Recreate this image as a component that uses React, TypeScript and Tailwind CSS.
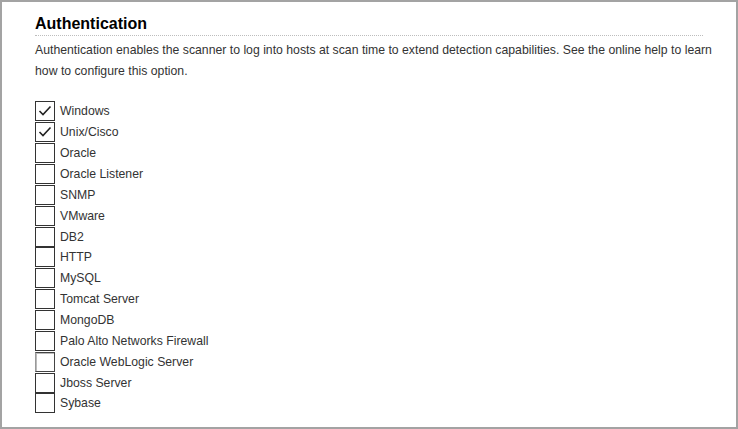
import React from "react";

const items = [
  { label: "Windows", checked: true },
  { label: "Unix/Cisco", checked: true },
  { label: "Oracle", checked: false },
  { label: "Oracle Listener", checked: false },
  { label: "SNMP", checked: false },
  { label: "VMware", checked: false },
  { label: "DB2", checked: false },
  { label: "HTTP", checked: false },
  { label: "MySQL", checked: false },
  { label: "Tomcat Server", checked: false },
  { label: "MongoDB", checked: false },
  { label: "Palo Alto Networks Firewall", checked: false },
  { label: "Oracle WebLogic Server", checked: false, focused: true },
  { label: "Jboss Server", checked: false },
  { label: "Sybase", checked: false },
];

const App = () => {
  return (
    <div
      className="w-[738px] h-[429px] bg-white border-2 border-[#a3a3a3] pl-[33px] pt-[12px] text-[#333]"
      style={{ fontFamily: '"Liberation Sans", Arial, sans-serif' }}
    >
      {/* Section header */}
      <h2 className="w-[668px] text-[16px] font-bold leading-[20px] text-black pb-[1px] border-b border-dotted border-[#bdbdbd]">
        Authentication
      </h2>
      <p className="w-[690px] mt-[4px] text-[12.25px] leading-[21px]">
        Authentication enables the scanner to log into hosts at scan time to
        extend detection capabilities. See the online help to learn how to
        configure this option.
      </p>

      {/* Credential types */}
      <div className="mt-[19px] flex flex-col">
        {items.map((item) => (
          <label key={item.label} className="h-[20.86px] flex items-center gap-[5px]">
            <span
              className={`w-[20px] h-[20px] shrink-0 bg-white flex items-center justify-center border ${
                item.focused
                  ? "border-[#444] border-l-[#999] shadow-[inset_1px_1px_0_#bbb]"
                  : "border-[#333]"
              }`}
            >
              {item.checked && (
                <svg width="18" height="18" viewBox="0 0 18 18">
                  <path
                    d="M3.5 9 L7 12.5 L14.5 4.5"
                    fill="none"
                    stroke="#222"
                    strokeWidth="1.6"
                  />
                </svg>
              )}
            </span>
            <span className="text-[12.25px] leading-[14px]">{item.label}</span>
          </label>
        ))}
      </div>
    </div>
  );
};

export default App;
